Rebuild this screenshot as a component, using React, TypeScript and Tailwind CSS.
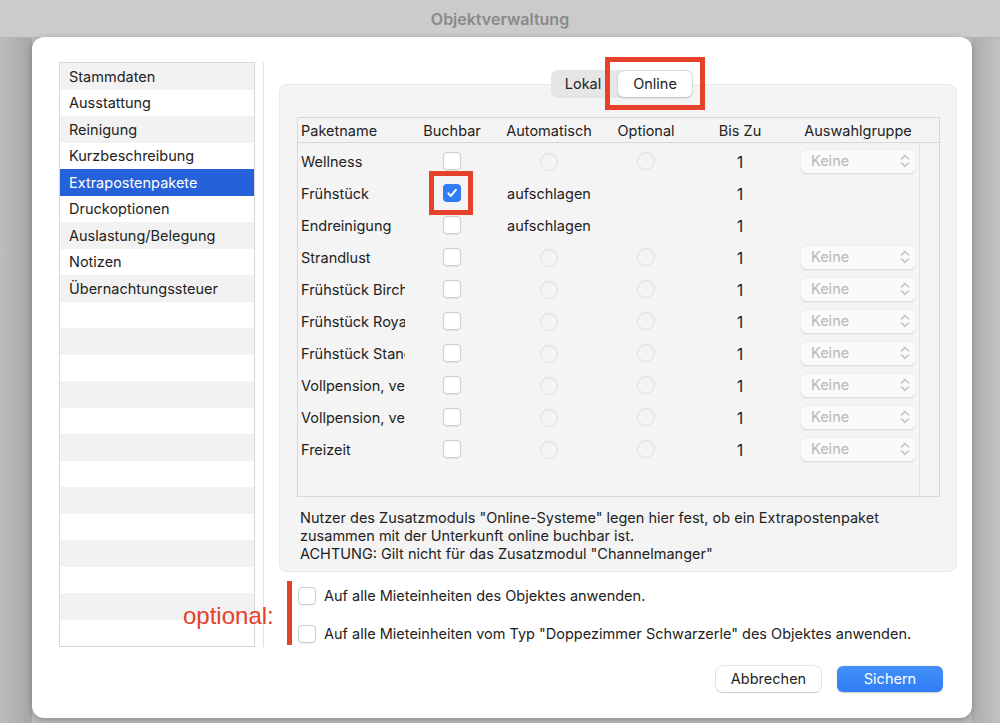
import React from "react"

const sidebarItems = [
  "Stammdaten",
  "Ausstattung",
  "Reinigung",
  "Kurzbeschreibung",
  "Extrapostenpakete",
  "Druckoptionen",
  "Auslastung/Belegung",
  "Notizen",
  "Übernachtungssteuer",
]

type Row = {
  name: string
  checked?: boolean
  auto?: string
}

const rows: Row[] = [
  { name: "Wellness" },
  { name: "Frühstück", checked: true, auto: "aufschlagen" },
  { name: "Endreinigung", auto: "aufschlagen" },
  { name: "Strandlust" },
  { name: "Frühstück Birchermüsli" },
  { name: "Frühstück Royal" },
  { name: "Frühstück Standard" },
  { name: "Vollpension, vegan" },
  { name: "Vollpension, vegetarisch" },
  { name: "Freizeit" },
]

function Checkbox({ checked }: { checked?: boolean }) {
  if (checked) {
    return (
      <div className="w-[18px] h-[18px] rounded-[4px] bg-[#2f7cf6] flex items-center justify-center">
        <svg width="12" height="12" viewBox="0 0 12 12" fill="none">
          <path d="M2.3 6.4 L4.9 9 L9.8 2.8" stroke="white" strokeWidth="2" strokeLinecap="round" strokeLinejoin="round" />
        </svg>
      </div>
    )
  }
  return <div className="w-[18px] h-[18px] rounded-[4px] bg-white border border-[#cdcdcd] shadow-[0_0.5px_1px_rgba(0,0,0,0.06)]" />
}

function Radio() {
  return <div className="w-[18px] h-[18px] rounded-full bg-[#f4f4f4] border border-[#e0e0e0] shadow-[inset_0_1px_1px_rgba(0,0,0,0.04)]" />
}

function Chevrons() {
  return (
    <svg width="10" height="16" viewBox="0 0 10 16" fill="none">
      <path d="M1.5 6 L5 2.5 L8.5 6" stroke="#c4c4c4" strokeWidth="1.6" strokeLinecap="round" strokeLinejoin="round" />
      <path d="M1.5 10 L5 13.5 L8.5 10" stroke="#c4c4c4" strokeWidth="1.6" strokeLinecap="round" strokeLinejoin="round" />
    </svg>
  )
}

function Select() {
  return (
    <div className="w-[114px] h-[23px] rounded-[5px] bg-[#fafafa] shadow-[0_0.5px_1.5px_rgba(0,0,0,0.13)] flex items-center justify-between pl-[10px] pr-[5px] text-[14.5px] text-[#b7b7b7]">
      Keine
      <Chevrons />
    </div>
  )
}

export default function App() {
  return (
    <div className="w-[1000px] h-[723px] bg-[#bcbcbc] flex flex-col overflow-hidden font-['Inter',sans-serif] text-[#222]">
      {/* window title */}
      <div className="h-[38px] shrink-0 bg-[#cbcbcb] border-b border-[#b3b3b3] flex items-center justify-center text-[16px] font-semibold text-[#8a8a8a]">
        Objektverwaltung
      </div>

      <div className="flex flex-1">
        <div className="w-[32px] bg-gradient-to-r from-[#bdbdbd] to-[#a6a6a6]" />

        {/* sheet */}
        <div className="relative -mt-px w-[940px] h-[681px] bg-white rounded-[12px] shadow-[0_2px_6px_rgba(0,0,0,0.25)] flex pl-[27px] pt-[25px]">
          {/* sidebar */}
          <div className="w-[196px] h-[585px] border border-[#d6d6d6] flex flex-col text-[14.5px]">
            {Array.from({ length: 22 }).map((_, i) => {
              const label = sidebarItems[i]
              const selected = i === 4
              return (
                <div
                  key={i}
                  className={
                    "h-[26.5px] shrink-0 flex items-center pl-[9px] pt-px " +
                    (selected ? "bg-[#2562d9] text-white" : i % 2 === 0 ? "bg-[#f2f2f2]" : "bg-white")
                  }
                >
                  {label}
                </div>
              )
            })}
          </div>

          <div className="ml-[8px] w-px h-[585px] bg-[#e2e2e2]" />

          {/* right column */}
          <div className="ml-[15px] w-[678px] flex flex-col pt-[8px]">
            {/* segmented control */}
            <div className="relative z-10 self-center ml-[8px] h-[28px] rounded-[7px] bg-[#e6e6e6] flex items-center p-[1px] text-[14.5px]">
              <div className="w-[66px] text-center pr-[4px]">Lokal</div>
              <div className="w-[74px] h-[26px] rounded-[6px] bg-white shadow-[0_0.5px_2px_rgba(0,0,0,0.2)] flex items-center justify-center">
                Online
              </div>
              <div className="absolute left-[54px] -top-[13px] w-[100px] h-[53px] border-[5px] border-[#e5412b]" />
            </div>

            {/* tab box */}
            <div className="-mt-[14px] h-[488px] rounded-[8px] bg-[#f4f4f4] border border-[#e9e9e9] flex flex-col pt-[32px] pl-[17px] pr-[16px]">
              {/* table */}
              <div className="relative h-[380px] border border-[#d8d8d8] bg-[#f4f4f4] flex flex-col text-[14.5px]">
                <div className="h-[25px] shrink-0 border-b border-[#d8d8d8] flex items-center pt-px">
                  <div className="w-[111px] pl-[3px]">Paketname</div>
                  <div className="w-[86px] text-center">Buchbar</div>
                  <div className="w-[108px] text-center">Automatisch</div>
                  <div className="w-[86px] text-center">Optional</div>
                  <div className="w-[102px] text-center">Bis Zu</div>
                  <div className="w-[134px] text-center">Auswahlgruppe</div>
                </div>
                <div className="flex flex-1">
                  <div className="flex-1 flex flex-col pt-[2px]">
                    {rows.map((r) => {
                      const plain = !r.auto
                      return (
                        <div key={r.name} className="h-[32px] shrink-0 flex items-center">
                          <div className="w-[111px] pl-[3px] pt-px">
                            <div className="w-[104px] overflow-hidden whitespace-nowrap">{r.name}</div>
                          </div>
                          <div className="w-[86px] flex justify-center">
                            <Checkbox checked={r.checked} />
                          </div>
                          <div className="w-[108px] flex justify-center pt-px">{plain ? <Radio /> : r.auto}</div>
                          <div className="w-[86px] flex justify-center">{plain ? <Radio /> : null}</div>
                          <div className="w-[102px] text-center text-[16px] pt-px">1</div>
                          <div className="pl-[10px]">{plain ? <Select /> : null}</div>
                        </div>
                      )
                    })}
                  </div>
                  <div className="w-[20px] border-l border-[#e2e2e2]" />
                </div>
                {/* annotation around checked box */}
                <div className="absolute left-[131px] top-[53px] w-[44px] h-[44px] border-[5px] border-[#e5412b]" />
              </div>

              <p className="mt-[12px] pl-[3px] text-[14.5px] leading-[18px]">
                Nutzer des Zusatzmoduls "Online-Systeme" legen hier fest, ob ein Extrapostenpaket
                <br />
                zusammen mit der Unterkunft online buchbar ist.
                <br />
                ACHTUNG: Gilt nicht für das Zusatzmodul "Channelmanger"
              </p>
            </div>

            {/* apply options */}
            <div className="relative mt-[14px] flex flex-col gap-[18px] pl-[19px] text-[14.5px]">
              <div className="flex items-center gap-[8px] h-[20px]">
                <Checkbox />
                <span>Auf alle Mieteinheiten des Objektes anwenden.</span>
              </div>
              <div className="flex items-center gap-[8px] h-[20px]">
                <Checkbox />
                <span>Auf alle Mieteinheiten vom Typ "Doppezimmer Schwarzerle" des Objektes anwenden.</span>
              </div>
              <div className="absolute left-[8px] -top-[5px] w-[5px] h-[64px] bg-[#e5412b]" />
              <div className="absolute -left-[96px] top-[16px] text-[24px] leading-[28px] text-[#e5412b] font-['Liberation_Sans',sans-serif]">
                optional:
              </div>
            </div>

            {/* buttons */}
            <div className="mt-[22px] flex justify-end gap-[16px] pr-[14px] text-[14.5px]">
              <button className="w-[105px] h-[26px] rounded-[6px] bg-white shadow-[0_0_0_0.5px_rgba(0,0,0,0.18),0_1px_1.5px_rgba(0,0,0,0.12)]">
                Abbrechen
              </button>
              <button className="w-[106px] h-[26px] rounded-[6px] bg-gradient-to-b from-[#4390f8] to-[#2f7cf6] text-white shadow-[0_0.5px_1.5px_rgba(0,0,0,0.2)]">
                Sichern
              </button>
            </div>
          </div>
        </div>

        <div className="flex-1 bg-gradient-to-r from-[#adadad] to-[#c2c2c2]" />
      </div>
    </div>
  )
}
